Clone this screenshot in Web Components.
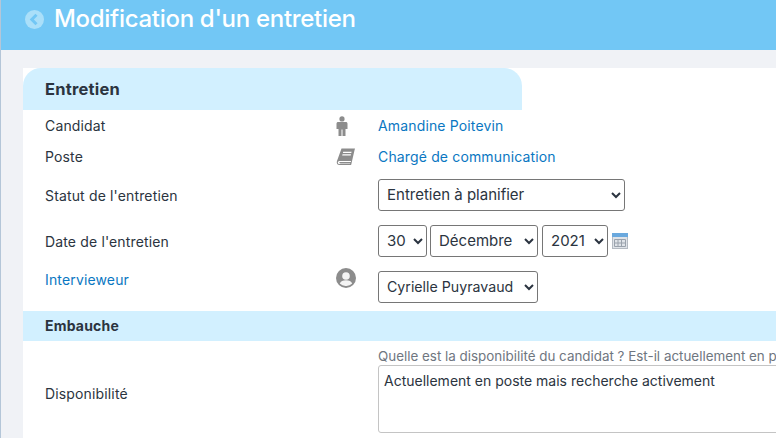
<!DOCTYPE html>
<html lang="fr"><head><meta charset="utf-8"><title>Modification d'un entretien</title>
<style>
html,body{margin:0;height:438px;overflow:hidden;background:#f0f2f6}
body{font:14px Inter,"Noto Sans",sans-serif;color:#2b3440}
</style></head><body>
<app-page>
  <page-header slot="header">Modification d'un entretien</page-header>
  <form-card>
    <span slot="title">Entretien</span>
    <form-row h="31" label="Candidat" icon="person"><a-link>Amandine Poitevin</a-link></form-row>
    <form-row h="31" label="Poste" icon="book"><a-link>Chargé de communication</a-link></form-row>
    <form-row h="46" label="Statut de l'entretien"><ui-select w="247" value="Entretien à planifier"></ui-select></form-row>
    <form-row h="46" label="Date de l'entretien">
      <ui-select w="49" value="30"></ui-select><ui-select w="108" value="Décembre"></ui-select><ui-select w="66" gap value="2021"></ui-select><cal-icon></cal-icon>
    </form-row>
    <form-row h="47" top label="Intervieweur" link icon="user"><ui-select w="160" fs="14.2" value="Cyrielle Puyravaud"></ui-select></form-row>
    <section-bar>Embauche</section-bar>
    <form-row h="104" area label="Disponibilité">
      <ui-area hint="Quelle est la disponibilité du candidat ? Est-il actuellement en poste ?" value="Actuellement en poste mais recherche activement"></ui-area>
    </form-row>
  </form-card>
</app-page>
<script>
function def(name, css, html){
  customElements.define(name, class extends HTMLElement{
    constructor(){super();this.attachShadow({mode:'open'});}
    connectedCallback(){
      const t=typeof html==='function'?html(this):html;
      this.shadowRoot.innerHTML='<style>'+css+'</style>'+t;
    }
  });
}
const ICONS={
 person:'<svg width="12" height="20" viewBox="1 0 12 20" fill="#8c8c8c" style="display:block"><circle cx="7" cy="2.9" r="2.6"/><path d="M3.2 6h7.6c1 0 1.7.7 1.7 1.7v5.300h-2V20H7.500v-6.600h-1V20H3.500v-7h-2V7.700C1.500 6.700 2.200 6 3.200 6z"/></svg>',
 book:'<svg width="20" height="18" viewBox="0 0 20 18" style="display:block"><path fill="#8c8c8c" d="M5.500.6H19l-.6 2.200L15.600 15l-.5 2H3.600C1.300 17 .3 15.400.9 13.300z"/><path fill="#fff" d="M1.900 14.200c.2-.9 1-1.300 2-1.300h11.300l-.5 1.100H4.300c-.9 0-1.200.5-.8 1 .2.300.6.400 1.100.4h9.700l-.3.700H3.800c-1.500 0-2.300-.9-1.900-1.900z"/><path fill="#fff" d="M7.200 3.800h8.400l-.3 1.300H6.900zM6.500 6.200h8.500l-.3 1.300H6.200z"/></svg>',
 user:'<svg width="20" height="20" viewBox="0 0 20 20" style="display:block"><circle cx="10" cy="10" r="10" fill="#8c8c8c"/><circle cx="10" cy="8" r="3.800" fill="#f4f4f4"/><path fill="#f4f4f4" d="M3.800 15.600c1-2.300 3-3.300 6.200-3.300s5.200 1 6.200 3.300A8 8 0 0 1 10 18a8 8 0 0 1-6.200-2.400z"/></svg>'
};
def('app-page',':host{display:block;height:438px;border-left:1px solid #b4c6d8;box-sizing:border-box;overflow:hidden}','<slot name="header"></slot><main style="padding:18px 0 0 22px"><slot></slot></main>');
def('page-header',':host{display:flex;align-items:flex-start;gap:10px;height:50px;box-sizing:border-box;padding:3px 0 0 24px;background:#72c7f5;color:#fff;font:500 24px/31px Inter,sans-serif;letter-spacing:-.3px}svg{margin-top:7px;flex:none}',
 '<svg width="19" height="19" viewBox="0 0 19 19"><circle cx="9.500" cy="9.500" r="9.500" fill="#aadff9"/><path d="M11.500 4.800 6.800 9.500l4.700 4.700" fill="none" stroke="#72c7f5" stroke-width="3"/></svg><span><slot></slot></span>');
def('form-card',':host{display:block;background:#fff;min-height:400px}.t{width:499px;height:42px;box-sizing:border-box;background:#d2f0ff;border-radius:18px 18px 0 0;padding:0 22px;font:700 16.500px/42px Inter,sans-serif;letter-spacing:.2px;color:#2b3440}',
 '<div class="t"><slot name="title"></slot></div><slot></slot>');
def('form-row',':host{display:flex;align-items:center;box-sizing:border-box;padding-left:22px;font-size:14px}:host([top]){align-items:flex-start;padding-top:7px}.l{width:290px;flex:none;letter-spacing:.15px}.l.link{color:#0a77c2}:host([top]) .l{line-height:18px}.i{width:43px;flex:none;display:flex;justify-content:flex-start;padding-left:1px;box-sizing:border-box}:host([top]) .i{margin-top:-3px}.c{display:flex;align-items:center;gap:3px;flex:1;min-width:0}:host([area]) .c{align-self:flex-start}',
 h=>`<style>:host{height:${h.getAttribute('h')}px}</style><div class="l${h.hasAttribute('link')?' link':''}">${h.getAttribute('label')}</div><div class="i">${ICONS[h.getAttribute('icon')]||''}</div><div class="c"><slot></slot></div>`);
def('a-link',':host{color:#0a77c2;font-size:14px;letter-spacing:.15px}','<slot></slot>');
def('ui-select',':host{display:block}:host([gap]){margin-left:1px}select{display:block;height:32px;box-sizing:border-box;font:15px Inter,sans-serif;color:#2b3440;background:#fff;border:1px solid #767676;border-radius:3px;padding:0 0 2px 4px}',
 h=>`<select style="width:${h.getAttribute('w')}px;${h.hasAttribute('fs')?'font-size:'+h.getAttribute('fs')+'px':''}"><option>${h.getAttribute('value')}</option></select>`);
def('cal-icon',':host{display:block;margin-left:1px}',
 '<svg width="16" height="16" viewBox="0 0 16 16" style="display:block"><rect x=".5" y=".5" width="15" height="15" fill="#dfe3e8" stroke="#b4bac2"/><rect width="16" height="4" fill="#6aa9de"/><path d="M2.500 6.500h11v7h-11zM6 6.500v7M9.500 6.500v7M2.500 10h11" fill="none" stroke="#9aa2ac"/></svg>');
def('section-bar',':host{display:block;height:30px;background:#d2f0ff;padding-left:22px;font:700 14px/30px Inter,sans-serif;letter-spacing:.2px;color:#2b3440}','<slot></slot>');
def('ui-area',':host{display:block;width:500px;flex:none;padding-top:6px}.h{font-size:13.400px;line-height:18px;color:#6f7680;white-space:nowrap}.a{height:68px;box-sizing:border-box;border:1px solid #c4c4c4;border-radius:3px;padding:6px 5px 0;font-size:14px;line-height:18px;color:#2b3440}',
 h=>`<div class="h">${h.getAttribute('hint')}</div><div class="a">${h.getAttribute('value')}</div>`);
</script>
</body></html>
